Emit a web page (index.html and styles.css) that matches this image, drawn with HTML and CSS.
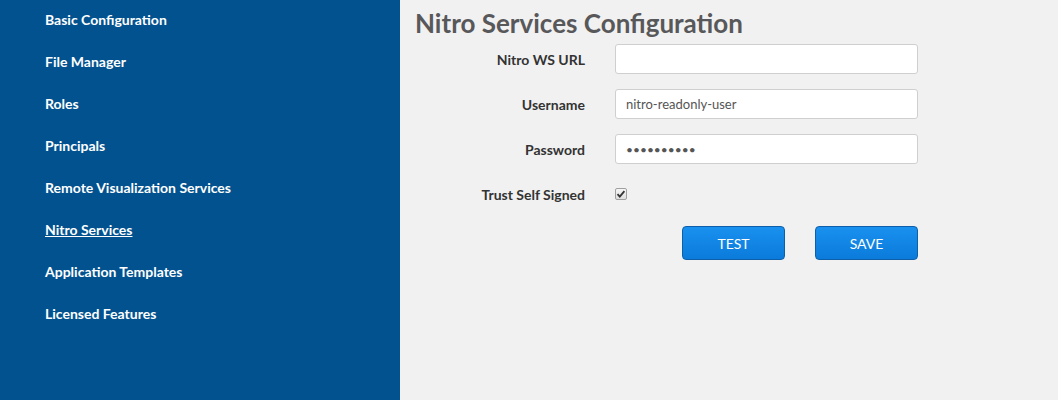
FILE: index.html
```html
<!DOCTYPE html>
<html lang="en">
<head>
    <meta charset="UTF-8">
    <meta name="viewport" content="width=device-width, initial-scale=1.0">
    <title>Nitro Services Configuration</title>
    <link rel="stylesheet" href="styles.css">
</head>
<body>
    <div class="layout">
        <nav class="sidebar">
            <ul class="nav-list">
                <li><a href="#">Basic Configuration</a></li>
                <li><a href="#">File Manager</a></li>
                <li><a href="#">Roles</a></li>
                <li><a href="#">Principals</a></li>
                <li><a href="#">Remote Visualization Services</a></li>
                <li><a href="#" class="active">Nitro Services</a></li>
                <li><a href="#">Application Templates</a></li>
                <li><a href="#">Licensed Features</a></li>
            </ul>
        </nav>

        <main class="content">
            <h1 class="page-title">Nitro Services Configuration</h1>
            <form class="config-form">
                <label class="form-label" for="wsUrl">Nitro WS URL</label>
                <input class="form-input" type="text" id="wsUrl" value="">

                <label class="form-label" for="username">Username</label>
                <input class="form-input" type="text" id="username" value="nitro-readonly-user">

                <label class="form-label" for="password">Password</label>
                <input class="form-input password" type="password" id="password" value="secretpass">

                <label class="form-label" for="trust">Trust Self Signed</label>
                <div class="check-cell">
                    <span class="checkbox" id="trust">
                        <svg width="10" height="10" viewBox="0 0 10 10">
                            <path d="M1.5 5.2 L3.8 7.6 L8.4 2.2" fill="none" stroke="#333" stroke-width="1.8"/>
                        </svg>
                    </span>
                </div>

                <div class="form-actions">
                    <button type="button" class="btn">Test</button>
                    <button type="button" class="btn">Save</button>
                </div>
            </form>
        </main>
    </div>
</body>
</html>
```

FILE: styles.css
```css
body {
    margin: 0;
    font-family: Lato, "Open Sans", sans-serif;
    font-size: 14px;
}

.layout {
    display: flex;
    height: 100vh;
}

.sidebar {
    width: 400px;
    flex-shrink: 0;
    background-color: #01528f;
}

.nav-list {
    list-style: none;
    margin: -1px 0 0 0;
    padding: 0 0 0 45px;
}

.nav-list li {
    height: 42px;
    line-height: 42px;
}

.nav-list a {
    color: #fff;
    font-weight: bold;
    text-decoration: none;
}

.nav-list a.active {
    text-decoration: underline;
}

.content {
    flex: 1;
    padding-left: 15px;
    background-color: #f1f1f1;
}

.page-title {
    margin: 6px 0 4px;
    font-size: 26px;
    line-height: 34px;
    font-weight: bold;
    color: #58585a;
}

.config-form {
    display: grid;
    grid-template-columns: 170px 303px;
    column-gap: 30px;
    row-gap: 15px;
    align-items: center;
}

.form-label {
    text-align: right;
    font-weight: bold;
    color: #333;
}

.form-input {
    box-sizing: border-box;
    height: 30px;
    padding: 0 10px;
    border: 1px solid #cfcfcf;
    border-radius: 3px;
    background: #fff;
    font-family: Lato, "Open Sans", sans-serif;
    font-size: 13px;
    color: #555;
}

.form-input.password {
    font-size: 12px;
}

.check-cell {
    height: 30px;
    display: flex;
    align-items: center;
}

.checkbox {
    box-sizing: border-box;
    width: 12px;
    height: 12px;
    display: flex;
    align-items: center;
    justify-content: center;
    border: 1px solid #a0a0a0;
    border-radius: 2px;
    background: linear-gradient(#f6f6f6, #dedede);
}

.form-actions {
    grid-column: 2;
    display: flex;
    justify-content: flex-end;
    gap: 30px;
    margin-top: 2px;
}

.btn {
    width: 103px;
    height: 34px;
    border: 1px solid #0c5fa8;
    border-radius: 4px;
    background: linear-gradient(#1990ef, #0b7bdb);
    color: #fff;
    font-family: Lato, "Open Sans", sans-serif;
    font-size: 14px;
    text-transform: uppercase;
    cursor: pointer;
}
```
